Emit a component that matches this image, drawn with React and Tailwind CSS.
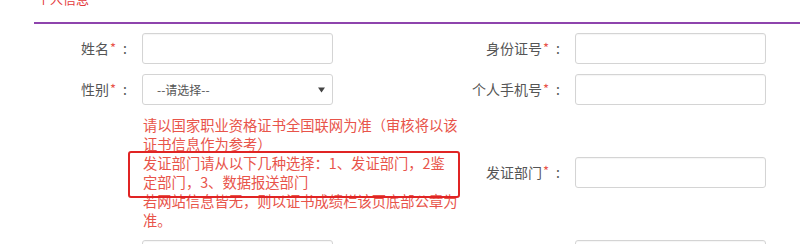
import React from "react";

function Label({ text }) {
  return (
    <div className="flex items-center justify-end pr-[15px] text-[14px] leading-[19px] text-[#555] whitespace-nowrap">
      <span>{text}</span>
      <span className="text-[#e8544a] ml-[1px] text-[13px] -mt-[3px]">*</span>
      <span className="ml-[7px]">:</span>
    </div>
  );
}

function Input() {
  return <div className="w-[191px] h-[31px] border border-[#d4d4d4] rounded-[3px] bg-white shadow-[inset_0_1px_1px_rgba(0,0,0,0.04)]" />;
}

function Select() {
  return (
    <div className="w-[191px] h-[31px] border border-[#d4d4d4] rounded-[3px] bg-white flex items-center justify-between pl-[14px] pr-[6px]">
      <span className="text-[12px] text-[#555] leading-none">--请选择--</span>
      <svg width="7" height="6" viewBox="0 0 7 6" className="mr-[1px]">
        <path d="M0 0.5 L7 0.5 L3.5 5.5 Z" fill="#444" />
      </svg>
    </div>
  );
}

export default function App() {
  const lines = [
    "请以国家职业资格证书全国联网为准（审核将以该",
    "证书信息作为参考）",
    "发证部门请从以下几种选择：1、发证部门，2鉴",
    "定部门，3、数据报送部门",
    "若网站信息皆无，则以证书成绩栏该页底部公章为",
    "准。",
  ];
  return (
    <div className="w-[800px] h-[244px] overflow-hidden bg-white font-['Noto_Sans_CJK_SC','Microsoft_YaHei',sans-serif] [text-spacing-trim:space-all]">
      <div className="ml-[34px] -mt-[11px] pl-[3px] pb-[14px] border-b-2 border-[#8e44ad] text-[13px] leading-[19px] text-[#e4393c]">
        个人信息
      </div>
      <div className="grid grid-cols-[108px_323px_110px_191px] pt-[9px] ml-[34px]">
        <Label text="姓名" />
        <div><Input /></div>
        <Label text="身份证号" />
        <Input />

        <div className="col-span-4 h-[10px]" />

        <Label text="性别" />
        <div><Select /></div>
        <Label text="个人手机号" />
        <Input />

        <div className="col-span-4 h-[10px]" />

        <div />
        <div className="relative text-[14.3px] leading-[19px] text-[#e8544a] pl-[1px]">
          {lines.map((l, i) => (
            <div key={i} className="whitespace-nowrap">{l}</div>
          ))}
          <div className="absolute left-[-14px] top-[36px] w-[332px] h-[47px] border-2 border-[#e02424] rounded-[3px]" />
        </div>
        <div className="flex items-center">
          <div className="w-full"><Label text="发证部门" /></div>
        </div>
        <div className="flex items-center"><Input /></div>

        <div className="col-span-4 h-[11px]" />

        <div />
        <div><Input /></div>
        <div />
        <Input />
      </div>
    </div>
  );
}
